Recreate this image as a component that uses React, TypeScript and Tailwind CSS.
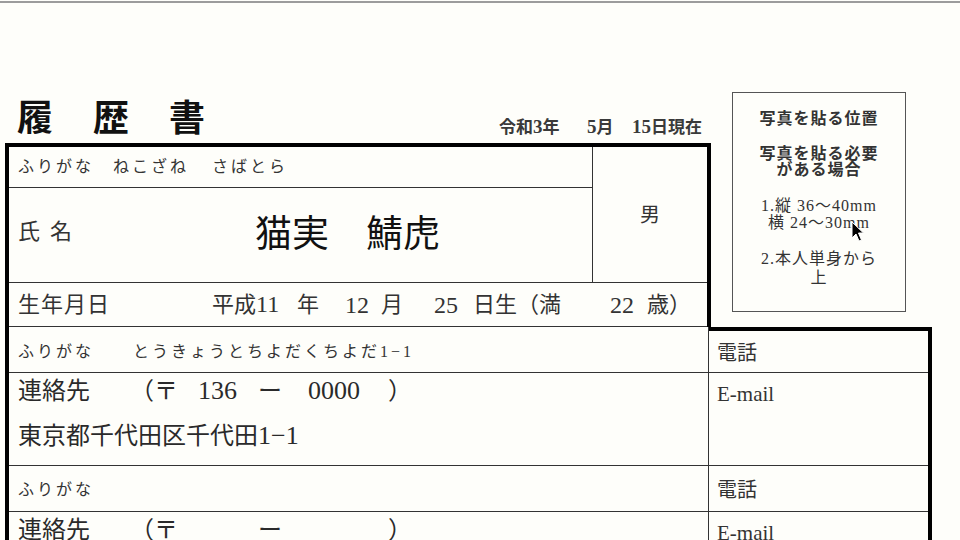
import React from "react";

function Cursor() {
  return (
    <svg
      className="absolute left-[118px] top-[128px]"
      width="14"
      height="22"
      viewBox="0 0 14 22"
    >
      <path
        d="M1 1 L1 17 L5 13 L8 20 L10.5 19 L7.5 12 L12.5 12 Z"
        fill="#000"
        stroke="#fff"
        strokeWidth="1"
        strokeLinejoin="round"
      />
    </svg>
  );
}

export default function App() {
  return (
    <div className="w-[960px] h-[540px] overflow-hidden bg-[#fefefa] text-[#2a2a2a] font-['Liberation_Serif','Noto_Sans_CJK_JP',serif]">
      <div className="h-[1px]" />
      <div className="h-[2px] bg-[#9c9c9c]" />

      {/* header + upper table + photo */}
      <div className="flex pt-[89px]">
        <div className="ml-[5px] w-[706px] flex flex-col">
          <div className="h-[51px] flex items-end">
            <div className="ml-[12px] mb-[6px] flex gap-[40px] text-[36px] leading-[36px] font-bold text-[#111]">
              <span className="w-[36px]">履</span>
              <span className="w-[36px]">歴</span>
              <span className="w-[36px]">書</span>
            </div>
            <div className="ml-[294px] mb-[7px] flex text-[17px] leading-[17px] font-bold text-[#3a3a3a]">
              <span className="w-[88px]">令和<span className="text-[19px]">3</span>年</span>
              <span className="w-[45px]"><span className="text-[19px]">5</span>月</span>
              <span><span className="text-[19px]">15</span>日現在</span>
            </div>
          </div>

          <div className="h-[184px] border-t-4 border-l-4 border-r-4 border-black flex flex-col">
            <div className="h-[136px] flex border-b border-[#333]">
              <div className="w-[584px] flex flex-col border-r border-[#333]">
                <div className="h-[41px] flex items-center pl-[9px] border-b border-[#333] text-[16px] tracking-[3px] text-[#333]">
                  <span className="w-[95px]">ふりがな</span>
                  <span className="w-[99px]">ねこざね</span>
                  <span>さばとら</span>
                </div>
                <div className="flex-1 flex items-center pl-[9px]">
                  <div className="w-[237px] flex text-[22px] leading-[24px] text-[#333] pb-[6px]">
                    <span>氏</span>
                    <span className="ml-[10px]">名</span>
                  </div>
                  <span className="text-[37px] leading-[40px] text-[#111]">猫実　鯖虎</span>
                </div>
              </div>
              <div className="flex-1 flex items-center justify-center text-[20px] text-[#333]">
                男
              </div>
            </div>
            <div className="h-[44px] flex items-center pl-[9px] border-b border-[#333] text-[22px] leading-[24px] text-[#333]">
              <span className="w-[194px] tracking-[1px]">生年月日</span>
              <span className="w-[85px]">平成<span className="text-[24px]">11</span></span>
              <span className="w-[48px]">年</span>
              <span className="w-[36px] text-[24px]">12</span>
              <span className="w-[53px]">月</span>
              <span className="w-[39px] text-[24px]">25</span>
              <span className="w-[137px]">日生（満</span>
              <span className="w-[37px] text-[24px]">22</span>
              <span>歳）</span>
            </div>
          </div>
        </div>

        <div className="relative ml-[21px] w-[174px] h-[220px] border border-[#555] flex flex-col items-center text-[16px] tracking-[1px] text-[#333] font-bold">
          <div className="mt-[18px] leading-[16px]">写真を貼る位置</div>
          <div className="mt-[19px] leading-[16px] flex flex-col items-center">
            <span>写真を貼る必要</span>
            <span>がある場合</span>
          </div>
          <div className="mt-[19px] leading-[17px] flex flex-col items-center font-normal">
            <span>1.縦 36〜40mm</span>
            <span>横 24〜30mm</span>
          </div>
          <div className="mt-[18px] leading-[19px] flex flex-col items-center font-normal">
            <span>2.本人単身から</span>
            <span>上</span>
          </div>
          <Cursor />
        </div>
      </div>

      {/* lower table */}
      <div className="ml-[5px] w-[927px] border-l-4 border-r-4 border-black flex flex-col">
        <div className="h-[46px] flex">
          <div className="w-[700px] flex items-center pl-[9px] pt-[4px] border-r border-b border-[#333] text-[16px] tracking-[3px] text-[#333]">
            <span className="w-[115px]">ふりがな</span>
            <span>とうきょうとちよだくちよだ1−1</span>
          </div>
          <div className="flex-1 border-t-4 border-black">
            <div className="h-full flex items-center pl-[8px] pt-[2px] border-b border-[#333] text-[20px] text-[#333]">
              電話
            </div>
          </div>
        </div>
        <div className="h-[93px] flex">
          <div className="w-[700px] flex flex-col pl-[9px] pt-[3px] border-r border-b border-[#333] text-[24px] leading-[30px] text-[#2a2a2a]">
            <div className="flex">
              <span className="w-[112px]">連絡先</span>
              <span className="w-[68px]">（〒</span>
              <span className="w-[60px] text-[26px]">136</span>
              <span className="w-[50px]">ー</span>
              <span className="w-[80px] text-[26px]">0000</span>
              <span>）</span>
            </div>
            <div className="mt-[15px]">東京都千代田区千代田<span className="text-[26px]">1−1</span></div>
          </div>
          <div className="flex-1 pl-[8px] pt-[9px] border-b border-[#333] text-[21px] leading-[24px] text-[#333]">
            E-mail
          </div>
        </div>
        <div className="h-[46px] flex">
          <div className="w-[700px] flex items-center pl-[9px] pt-[2px] border-r border-b border-[#333] text-[16px] tracking-[3px] text-[#333]">
            ふりがな
          </div>
          <div className="flex-1 flex items-center pl-[8px] pt-[3px] border-b border-[#333] text-[20px] text-[#333]">
            電話
          </div>
        </div>
        <div className="h-[60px] flex">
          <div className="w-[700px] flex flex-col pl-[9px] pt-[3px] border-r border-[#333] text-[24px] leading-[30px] text-[#2a2a2a]">
            <div className="flex">
              <span className="w-[112px]">連絡先</span>
              <span className="w-[128px]">（〒</span>
              <span className="w-[130px]">ー</span>
              <span>）</span>
            </div>
          </div>
          <div className="flex-1 pl-[8px] pt-[9px] text-[21px] leading-[24px] text-[#333]">
            E-mail
          </div>
        </div>
      </div>
    </div>
  );
}
